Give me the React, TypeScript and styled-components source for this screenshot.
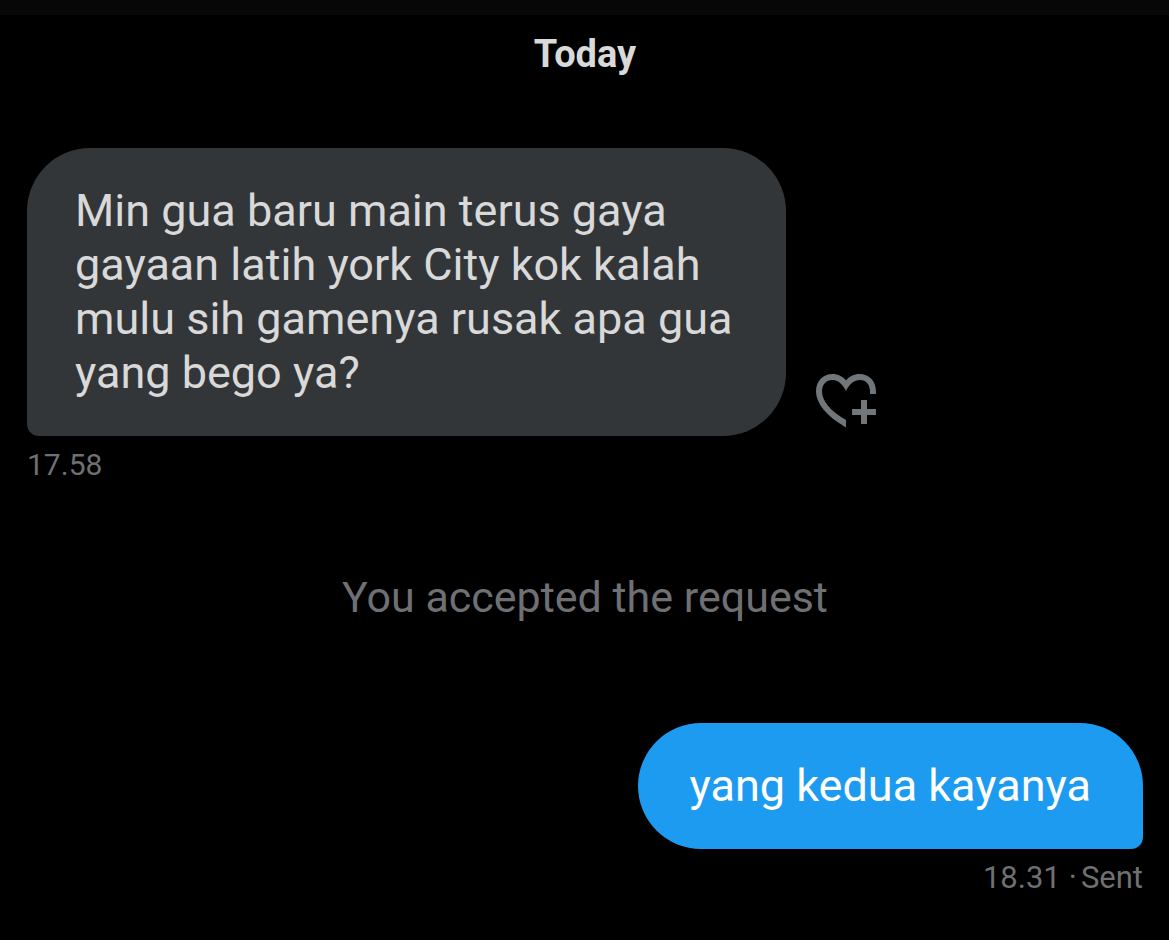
import React from "react";
import styled, { createGlobalStyle } from "styled-components";

const GlobalStyle = createGlobalStyle`
  * {
    box-sizing: border-box;
  }

  body {
    margin: 0;
    background: #000;
    color: #d9d9d9;
    font-family: Roboto, "Liberation Sans", sans-serif;
  }
`;

const TopBar = styled.header`
  height: 15px;
  background: #070707;
`;

const Conversation = styled.main`
  display: flex;
  flex-direction: column;
  padding: 15px 26px 40px 27px;
`;

const DayHeading = styled.h1`
  margin: 0 0 70px;
  font-size: 38px;
  line-height: 48px;
  font-weight: 700;
  text-align: center;
`;

const Message = styled.article<{ $own?: boolean }>`
  display: flex;
  flex-direction: column;
  align-items: ${({ $own }) => ($own ? "flex-end" : "flex-start")};
`;

const BubbleRow = styled.div`
  display: flex;
  align-items: flex-end;
  gap: 30px;
  width: 100%;
`;

const Bubble = styled.p<{ $own?: boolean }>`
  margin: 0;
  max-width: 68%;
  padding: ${({ $own }) => ($own ? "36px 52px" : "36px 48px")};
  border-radius: ${({ $own }) =>
    $own ? "63px 63px 12px 63px" : "63px 63px 63px 12px"};
  background: ${({ $own }) => ($own ? "#1d9bf0" : "#333639")};
  color: ${({ $own }) => ($own ? "#fff" : "#d9d9d9")};
  font-size: 45px;
  line-height: 54px;
`;

const ReactButton = styled.button`
  flex: none;
  display: flex;
  margin: 0;
  padding: 0 0 8px;
  border: 0;
  background: none;
  color: #71767b;
  cursor: pointer;
`;

const Meta = styled.div<{ $own?: boolean }>`
  display: flex;
  gap: 8px;
  margin-top: 9px;
  color: #6e7072;
  font-size: ${({ $own }) => ($own ? "31px" : "30px")};
  line-height: 40px;
`;

const Status = styled.span`
  display: flex;
  gap: 4px;
`;

const Notice = styled.p`
  margin: 84px 0 98px;
  color: #6e7073;
  font-size: 43px;
  line-height: 56px;
  text-align: center;
`;

function HeartPlusIcon() {
  return (
    <svg width="60" height="54" viewBox="0 0 60 54" fill="currentColor" aria-hidden="true">
      <path d="M30 53.5C10 42 0 29 0 17.5C0 7 7 0 16.5 0C22 0 27 2.5 30 6.5C33 2.5 38 0 43.5 0C53 0 60 7 60 17.5V20H54V17.5C54 10.5 50 6 44 6C38 6 34 9.5 30 17C26 9.5 22 6 16.5 6C10 6 6 10.5 6 17.5C6 26.5 14 37 30 46Z" />
      <path d="M45 26H51V35H60V41H51V50H45V41H36V35H45Z" />
    </svg>
  );
}

export default function App() {
  return (
    <>
      <GlobalStyle />
      <TopBar />
      <Conversation>
        <DayHeading>Today</DayHeading>
        <Message>
          <BubbleRow>
            <Bubble>
              Min gua baru main terus gaya gayaan latih york City kok kalah mulu
              sih gamenya rusak apa gua yang bego ya?
            </Bubble>
            <ReactButton type="button" aria-label="Add reaction">
              <HeartPlusIcon />
            </ReactButton>
          </BubbleRow>
          <Meta>
            <time>17.58</time>
          </Meta>
        </Message>
        <Notice>You accepted the request</Notice>
        <Message $own>
          <Bubble $own>yang kedua kayanya</Bubble>
          <Meta $own>
            <time>18.31</time>
            <Status>
              <span>·</span>
              <span>Sent</span>
            </Status>
          </Meta>
        </Message>
      </Conversation>
    </>
  );
}
